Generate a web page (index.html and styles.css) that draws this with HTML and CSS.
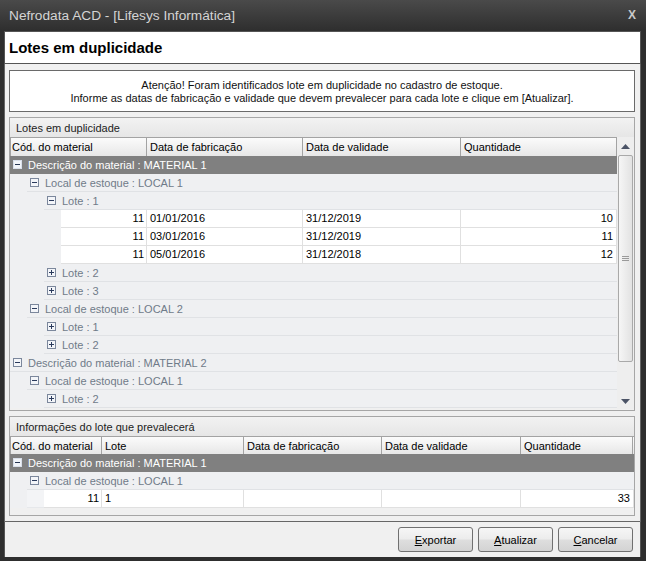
FILE: index.html
```html
<!DOCTYPE html>
<html lang="pt">
<head>
<meta charset="utf-8">
<title>Lotes em duplicidade</title>
<link rel="stylesheet" href="styles.css">
</head>
<body>
<div class="win">
  <div class="title">
    <span class="ttext">Nefrodata ACD - [Lifesys Informática]</span>
    <span class="close">X</span>
  </div>
  <div class="client">
    <div class="hdr">Lotes em duplicidade</div>
    <div class="main">
      <div class="msg">
        <p>Atenção! Foram identificados lote em duplicidade no cadastro de estoque.</p>
        <p>Informe as datas de fabricação e validade que devem prevalecer para cada lote e clique em [Atualizar].</p>
      </div>

      <div class="group g1">
        <div class="gcap">Lotes em duplicidade</div>
        <div class="gbody">
          <div class="grid">
            <div class="ghead h1 cols1">
              <div class="hc">Cód. do material</div>
              <div class="hc">Data de fabricação</div>
              <div class="hc">Data de validade</div>
              <div class="hc">Quantidade</div>
            </div>
            <div class="rows">
              <div class="row"><div class="rc sel"><svg class="tg" width="9" height="9" viewBox="0 0 9 9"><rect x="0.5" y="0.5" width="8" height="8" fill="#f1f4f9" stroke="#d9dfea"/><path d="M2 4.5h5" stroke="#263552"/></svg><span>Descrição do material : MATERIAL 1</span></div></div>
              <div class="row"><div class="ind i1"></div><div class="rc"><svg class="tg" width="9" height="9" viewBox="0 0 9 9"><rect x="0.5" y="0.5" width="8" height="8" fill="#f3f5f9" stroke="#7b879c"/><path d="M2 4.5h5" stroke="#2a3a5c"/></svg><span>Local de estoque : LOCAL 1</span></div></div>
              <div class="row"><div class="ind i2"></div><div class="rc"><svg class="tg" width="9" height="9" viewBox="0 0 9 9"><rect x="0.5" y="0.5" width="8" height="8" fill="#f3f5f9" stroke="#7b879c"/><path d="M2 4.5h5" stroke="#2a3a5c"/></svg><span>Lote : 1</span></div></div>
              <div class="row"><div class="ind i3"></div><div class="dc g1c1 num">11</div><div class="dc g1c2">01/01/2016</div><div class="dc g1c3">31/12/2019</div><div class="dc g1c4 num">10</div></div>
              <div class="row"><div class="ind i3"></div><div class="dc g1c1 num">11</div><div class="dc g1c2">03/01/2016</div><div class="dc g1c3">31/12/2019</div><div class="dc g1c4 num">11</div></div>
              <div class="row"><div class="ind i3"></div><div class="dc g1c1 num">11</div><div class="dc g1c2">05/01/2016</div><div class="dc g1c3">31/12/2018</div><div class="dc g1c4 num">12</div></div>
              <div class="row"><div class="ind i2"></div><div class="rc"><svg class="tg" width="9" height="9" viewBox="0 0 9 9"><rect x="0.5" y="0.5" width="8" height="8" fill="#f3f5f9" stroke="#7b879c"/><path d="M2 4.5h5M4.5 2v5" stroke="#2a3a5c"/></svg><span>Lote : 2</span></div></div>
              <div class="row"><div class="ind i2"></div><div class="rc"><svg class="tg" width="9" height="9" viewBox="0 0 9 9"><rect x="0.5" y="0.5" width="8" height="8" fill="#f3f5f9" stroke="#7b879c"/><path d="M2 4.5h5M4.5 2v5" stroke="#2a3a5c"/></svg><span>Lote : 3</span></div></div>
              <div class="row"><div class="ind i1"></div><div class="rc"><svg class="tg" width="9" height="9" viewBox="0 0 9 9"><rect x="0.5" y="0.5" width="8" height="8" fill="#f3f5f9" stroke="#7b879c"/><path d="M2 4.5h5" stroke="#2a3a5c"/></svg><span>Local de estoque : LOCAL 2</span></div></div>
              <div class="row"><div class="ind i2"></div><div class="rc"><svg class="tg" width="9" height="9" viewBox="0 0 9 9"><rect x="0.5" y="0.5" width="8" height="8" fill="#f3f5f9" stroke="#7b879c"/><path d="M2 4.5h5M4.5 2v5" stroke="#2a3a5c"/></svg><span>Lote : 1</span></div></div>
              <div class="row"><div class="ind i2"></div><div class="rc"><svg class="tg" width="9" height="9" viewBox="0 0 9 9"><rect x="0.5" y="0.5" width="8" height="8" fill="#f3f5f9" stroke="#7b879c"/><path d="M2 4.5h5M4.5 2v5" stroke="#2a3a5c"/></svg><span>Lote : 2</span></div></div>
              <div class="row"><div class="rc"><svg class="tg" width="9" height="9" viewBox="0 0 9 9"><rect x="0.5" y="0.5" width="8" height="8" fill="#f3f5f9" stroke="#7b879c"/><path d="M2 4.5h5" stroke="#2a3a5c"/></svg><span>Descrição do material : MATERIAL 2</span></div></div>
              <div class="row"><div class="ind i1"></div><div class="rc"><svg class="tg" width="9" height="9" viewBox="0 0 9 9"><rect x="0.5" y="0.5" width="8" height="8" fill="#f3f5f9" stroke="#7b879c"/><path d="M2 4.5h5" stroke="#2a3a5c"/></svg><span>Local de estoque : LOCAL 1</span></div></div>
              <div class="row"><div class="ind i2"></div><div class="rc"><svg class="tg" width="9" height="9" viewBox="0 0 9 9"><rect x="0.5" y="0.5" width="8" height="8" fill="#f3f5f9" stroke="#7b879c"/><path d="M2 4.5h5M4.5 2v5" stroke="#2a3a5c"/></svg><span>Lote : 2</span></div></div>
            </div>
          </div>
          <div class="vscroll">
            <div class="sbtn"><svg width="9" height="5" viewBox="0 0 9 5"><path d="M0 5L4.5 0L9 5Z" fill="#4b5366"/></svg></div>
            <div class="track">
              <div class="thumb"><svg width="7" height="5" viewBox="0 0 7 5"><path d="M0 0.5h7M0 2.5h7M0 4.5h7" stroke="#9a9a9a"/></svg></div>
            </div>
            <div class="sbtn dn"><svg width="9" height="5" viewBox="0 0 9 5"><path d="M0 0L4.5 5L9 0Z" fill="#4b5366"/></svg></div>
          </div>
        </div>
      </div>

      <div class="group g2">
        <div class="gcap">Informações do lote que prevalecerá</div>
        <div class="grid">
          <div class="ghead cols2">
            <div class="hc">Cód. do material</div>
            <div class="hc">Lote</div>
            <div class="hc">Data de fabricação</div>
            <div class="hc">Data de validade</div>
            <div class="hc">Quantidade</div>
          </div>
          <div class="rows">
            <div class="row"><div class="rc sel"><svg class="tg" width="9" height="9" viewBox="0 0 9 9"><rect x="0.5" y="0.5" width="8" height="8" fill="#f1f4f9" stroke="#d9dfea"/><path d="M2 4.5h5" stroke="#263552"/></svg><span>Descrição do material : MATERIAL 1</span></div></div>
            <div class="row"><div class="ind i1"></div><div class="rc"><svg class="tg" width="9" height="9" viewBox="0 0 9 9"><rect x="0.5" y="0.5" width="8" height="8" fill="#f3f5f9" stroke="#7b879c"/><path d="M2 4.5h5" stroke="#2a3a5c"/></svg><span>Local de estoque : LOCAL 1</span></div></div>
            <div class="row"><div class="ind i1"></div><div class="ind i1 alt"></div><div class="dc g2c1 num">11</div><div class="dc g2c2">1</div><div class="dc g2c3"></div><div class="dc g2c4"></div><div class="dc g2c5 num">33</div></div>
          </div>
        </div>
      </div>
    </div>
    <div class="foot">
      <button class="btn"><u>E</u>xportar</button>
      <button class="btn"><u>A</u>tualizar</button>
      <button class="btn"><u>C</u>ancelar</button>
    </div>
  </div>
</div>
</body>
</html>
```
FILE: styles.css
```css
* { box-sizing: border-box; }
html, body { margin: 0; padding: 0; }
body {
  background: #2d2d2d;
  font-family: "Liberation Sans", Arial, sans-serif;
  font-size: 11px;
  color: #000;
}
p { margin: 0; }

.win {
  width: 646px;
  height: 561px;
  background: #2e2e2e;
  display: flex;
  flex-direction: column;
  overflow: hidden;
}

.title {
  height: 30px;
  flex: none;
  background: linear-gradient(#4a4a4a, #2f2f2f);
  display: flex;
  align-items: center;
  justify-content: space-between;
  padding: 0 10px 0 9px;
  color: #d4d4d4;
  font-size: 13.7px;
}
.close {
  font-weight: bold;
  font-size: 12px;
  color: #c9c9c9;
}

.client {
  margin: 1px 5px 4px 4px;
  flex: 1;
  display: flex;
  flex-direction: column;
  background: #f0f0f0;
}

.hdr {
  height: 33px;
  flex: none;
  border: 1px solid #555;
  background: #fff;
  font-weight: bold;
  font-size: 15px;
  padding-left: 4px;
  display: flex;
  align-items: center;
}

.main {
  height: 458px;
  flex: none;
  border: 1px solid #666;
  border-top: none;
  padding: 6px 5px 0 4px;
  display: flex;
  flex-direction: column;
  gap: 5px;
}

.msg {
  height: 42px;
  flex: none;
  border: 1px solid #6a6a6a;
  background: #fff;
  text-align: center;
  display: flex;
  flex-direction: column;
  justify-content: center;
  line-height: 13px;
  color: #111;
  padding-top: 1px;
}

.group {
  flex: none;
  border: 1px solid #a6a6a6;
  background: #f0f0f0;
}
.g1 { height: 294px; }
.g2 { height: 100px; }

.gcap {
  height: 19px;
  background: linear-gradient(#f2f2f2, #e6e6e6);
  padding-left: 6px;
  display: flex;
  align-items: center;
  color: #1c1c1c;
}

.gbody { display: flex; }
.grid { flex: 1; }

.ghead {
  display: grid;
  height: 18px;
  border-top: 1px solid #a3a3a3;
  background: linear-gradient(#fbfbfb, #e7e7e7);
}
.ghead.h1 { height: 19px; }
.cols1 { grid-template-columns: 137px 156px 158px 156px; }
.cols2 { grid-template-columns: 92px 142px 138px 139px 112px; }
.hc {
  border-right: 1px solid #a3a3a3;
  padding-left: 3px;
  display: flex;
  align-items: center;
  white-space: nowrap;
  overflow: hidden;
}
.hc:first-child { border-left: 1px solid #a3a3a3; padding-left: 1px; }

.rows { background: #eff0f2; }
.row { display: flex; height: 18px; }
.ind { flex: none; }
.i1 { width: 17px; }
.i2 { width: 34px; }
.i3 { width: 51px; }
.ind.alt { background: #f3f4f6; border-bottom: 1px solid #e6e8eb; }

.rc {
  flex: 1;
  display: flex;
  align-items: center;
  gap: 6px;
  padding-left: 3px;
  border-bottom: 1px solid #e0e2e5;
  color: #6f7b89;
  white-space: nowrap;
}
.rc.sel {
  background: #808080;
  border-bottom-color: #808080;
  color: #fff;
}
.tg { flex: none; display: block; }

.dc {
  flex: none;
  background: #fff;
  border-right: 1px solid #e0e0e0;
  border-bottom: 1px solid #e0e0e0;
  padding: 0 3px;
  line-height: 17px;
  white-space: nowrap;
}
.num { text-align: right; padding-right: 2px; }
.g1c1 { width: 86px; }
.g1c2 { width: 156px; }
.g1c3 { width: 158px; }
.g1c4 { width: 156px; padding-right: 3px; }
.g2c1 { width: 58px; }
.g2c2 { width: 142px; }
.g2c3 { width: 138px; }
.g2c4 { width: 139px; }
.g2c5 { width: 113px; padding-right: 3px; }

.vscroll {
  width: 17px;
  flex: none;
  height: 272px;
  display: flex;
  flex-direction: column;
  background: #eeeeee;
}
.sbtn {
  height: 18px;
  flex: none;
  display: flex;
  align-items: center;
  justify-content: center;
}
.sbtn.dn { height: 20px; padding-top: 4px; }
.track {
  flex: 1;
  padding: 0 1px;
}
.thumb {
  height: 207px;
  border: 1px solid #a9a9a9;
  border-radius: 2px;
  background: linear-gradient(90deg, #f6f6f6, #e2e2e2);
  display: flex;
  align-items: center;
  justify-content: center;
}
.thumb svg { display: block; }

.foot {
  height: 35px;
  flex: none;
  border-left: 1px solid #555;
  border-right: 1px solid #555;
  display: flex;
  align-items: center;
  justify-content: flex-end;
  gap: 5px;
  padding-right: 7px;
}
.btn {
  width: 75px;
  height: 25px;
  border: 1px solid #707070;
  border-radius: 3px;
  background: linear-gradient(#f6f6f6 0%, #ececec 48%, #dedede 52%, #d3d3d3 100%);
  font-family: "Liberation Sans", Arial, sans-serif;
  font-size: 11px;
  color: #000;
  padding: 0;
}
```
